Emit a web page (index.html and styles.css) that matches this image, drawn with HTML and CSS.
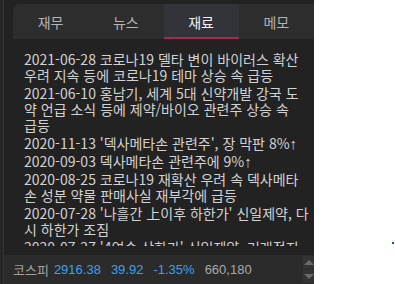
FILE: index.html
```html
<!DOCTYPE html>
<html lang="ko">
<head>
<meta charset="utf-8">
<link rel="stylesheet" href="styles.css">
</head>
<body>
<div class="panel">
  <div class="edge"></div>
  <div class="main">
    <div class="tabs">
      <div class="tab">재무</div>
      <div class="tab">뉴스</div>
      <div class="tab active">재료</div>
      <div class="tab">메모</div>
    </div>
    <div class="list">
      <div class="item">2021-06-28 코로나19 델타 변이 바이러스 확산 우려 지속 등에 코로나19 테마 상승 속 급등</div>
      <div class="item">2021-06-10 홍남기, 세계 5대 신약개발 강국 도<br>약 언급 소식 등에 제약/바이오 관련주 상승 속<br>급등</div>
      <div class="item">2020-11-13 '덱사메타손 관련주', 장 막판 8%<span class="arrow">↑</span></div>
      <div class="item">2020-09-03 덱사메타손 관련주에 9%<span class="arrow">↑</span></div>
      <div class="item">2020-08-25 코로나19 재확산 우려 속 덱사메타<br>손 성분 약물 판매사실 재부각에 급등</div>
      <div class="item">2020-07-28 '나흘간 上이후 하한가' 신일제약, 다시 하한가 조짐</div>
      <div class="item">2020-07-27 '4연속 상한가' 신일제약, 거래정지</div>
    </div>
    <div class="status">
      <span class="label">코스피</span>
      <span class="num">2916.38</span>
      <span class="num">39.92</span>
      <span class="num">-1.35%</span>
      <span class="vol">660,180</span>
      <div class="scroll">
        <div class="btn"><span class="up"></span></div>
        <div class="btn"><span class="down"></span></div>
      </div>
    </div>
  </div>
</div>
<div class="dot"></div>
</body>
</html>
```
FILE: styles.css
```css
html, body {
  margin: 0;
  padding: 0;
  background: #ffffff;
}
body {
  font-family: "Noto Sans CJK KR", sans-serif;
  position: relative;
  width: 395px;
  height: 284px;
  overflow: hidden;
}
.panel {
  width: 314px;
  height: 284px;
  background: #222222;
  display: flex;
}
.edge {
  width: 3px;
  background: #262626;
  border-right: 1px solid #333333;
}
.main {
  flex: 1;
  display: flex;
  flex-direction: column;
  min-width: 0;
}
.tabs {
  margin: 4px 0 0 9px;
  height: 35px;
  background: #2d2d2d;
  border-radius: 6px 0 0 0;
  display: flex;
}
.tab {
  flex: 1;
  display: flex;
  align-items: center;
  justify-content: center;
  font-size: 14px;
  color: #b4b4b4;
  box-sizing: border-box;
}
.tab.active {
  background: #33343a;
  color: #f0f0f0;
  border-bottom: 2px solid #b8214a;
  padding-top: 2px;
}
.list {
  flex: 1;
  overflow: hidden;
  padding: 12px 2px 0 20px;
  margin-bottom: 9px;
  font-size: 14px;
  line-height: 16px;
  color: #d2d2d2;
}
.item {
  margin-bottom: 2px;
}
.arrow {
  font-family: "Liberation Sans", sans-serif;
  font-size: 15px;
  line-height: 0;
}
.status {
  height: 29px;
  background: #2b2b2b;
  display: flex;
  align-items: center;
  padding-left: 9px;
  font-size: 13px;
  font-family: "Liberation Sans", "Noto Sans CJK KR", sans-serif;
}
.label {
  color: #a0a0a0;
  font-family: "Noto Sans CJK KR", sans-serif;
  margin-right: 5px;
}
.num {
  color: #3aa0f0;
  margin-right: 10px;
}
.vol {
  color: #a8a8a8;
}
.scroll {
  margin-left: auto;
  width: 11px;
  height: 29px;
  display: flex;
  flex-direction: column;
  justify-content: center;
  gap: 1px;
}
.btn {
  height: 13px;
  background: #333333;
  display: flex;
  align-items: center;
  justify-content: center;
}
.up {
  width: 0;
  height: 0;
  border-left: 5px solid transparent;
  border-right: 5px solid transparent;
  border-bottom: 5px solid #6a6a6a;
}
.down {
  width: 0;
  height: 0;
  border-left: 5px solid transparent;
  border-right: 5px solid transparent;
  border-top: 5px solid #6a6a6a;
}
.dot {
  position: absolute;
  left: 392px;
  top: 242px;
  width: 2px;
  height: 2px;
  background: #1f3cff;
}
```
